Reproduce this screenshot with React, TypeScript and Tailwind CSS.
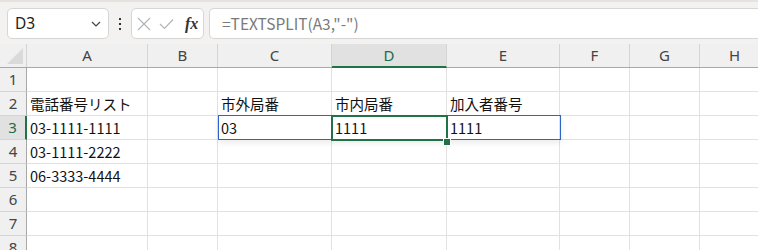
import React from "react";

const cols = [
  { key: "A", w: 121 },
  { key: "B", w: 70 },
  { key: "C", w: 114 },
  { key: "D", w: 115 },
  { key: "E", w: 113 },
  { key: "F", w: 70 },
  { key: "G", w: 70 },
  { key: "H", w: 70 },
];

const data: Record<string, string> = {
  A2: "電話番号リスト",
  A3: "03-1111-1111",
  A4: "03-1111-2222",
  A5: "06-3333-4444",
  C2: "市外局番",
  D2: "市内局番",
  E2: "加入者番号",
  C3: "03",
  D3: "1111",
  E3: "1111",
};

const cellFont = { fontFamily: '"Noto Sans CJK JP", "Noto Sans", sans-serif' };
const uiFont = { fontFamily: '"Noto Sans", "Open Sans", sans-serif' };

export default function App() {
  const rows = [1, 2, 3, 4, 5, 6, 7, 8];
  return (
    <div className="w-[758px] h-[250px] overflow-hidden bg-[#f3f2f1] flex flex-col" style={uiFont}>
      {/* toolbar */}
      <div className="h-[44px] flex items-start pt-[6px] border-t-2 border-[#e6e2de] shrink-0">
        <div className="ml-[7px] w-[102px] h-[31px] bg-white border border-[#d6d6d6] rounded-[5px] flex items-center pl-[7px] pr-[7px] justify-between">
          <span className="text-[15.5px] text-[#222]">D3</span>
          <svg width="10" height="6" viewBox="0 0 10 6">
            <path d="M1 1 L5 5 L9 1" stroke="#444" strokeWidth="1.2" fill="none" />
          </svg>
        </div>
        <div className="w-[22px] h-[31px] flex flex-col items-center justify-center gap-[3px]">
          <div className="w-[2px] h-[2px] bg-[#333]" />
          <div className="w-[2px] h-[2px] bg-[#333]" />
          <div className="w-[2px] h-[2px] bg-[#333]" />
        </div>
        <div className="w-[73px] h-[31px] bg-white border border-[#d6d6d6] rounded-[5px] flex items-center pl-[5px] gap-[8px]">
          <svg width="14" height="14" viewBox="0 0 14 14">
            <path d="M1 1 L13 13 M13 1 L1 13" stroke="#b4b4b4" strokeWidth="1.2" fill="none" />
          </svg>
          <svg width="15" height="12" viewBox="0 0 15 12">
            <path d="M1 6 L5.5 10.5 L14 1.5" stroke="#b4b4b4" strokeWidth="1.2" fill="none" />
          </svg>
          <span
            className="text-[16px] italic font-bold text-[#333] leading-none ml-[3px]"
            style={{ fontFamily: '"Liberation Serif", "DejaVu Serif", serif' }}
          >
            fx
          </span>
        </div>
        <div className="ml-[5px] flex-1 h-[31px] bg-white border border-[#d6d6d6] border-r-0 rounded-l-[5px] flex items-center pl-[12px]">
          <span className="text-[15.5px] text-[#7a7a7a]" style={cellFont}>
            =TEXTSPLIT(A3,"-")
          </span>
        </div>
      </div>

      {/* grid */}
      <div className="relative flex-1 bg-white">
        {/* header row */}
        <div className="flex h-[24px] bg-[#f0f0f0] border-b border-[#a8a8a8]">
          <div className="w-[27px] shrink-0 border-r border-[#d4d4d4] relative flex items-end justify-end pr-[3px] pb-[3px]">
            <svg width="16" height="16" viewBox="0 0 16 16">
              <path d="M16 0 L16 16 L0 16 Z" fill="#dadada" />
            </svg>
          </div>
          {cols.map((c) => (
            <div
              key={c.key}
              className={`shrink-0 flex items-center justify-center text-[15px] border-r border-[#d4d4d4] ${
                c.key === "D" ? "bg-[#e1e1e1] text-[#1e6b48] border-b-2 border-b-[#217346] -mb-px" : "text-[#444]"
              }`}
              style={{ width: c.w }}
            >
              {c.key}
            </div>
          ))}
        </div>
        {rows.map((r) => (
          <div key={r} className="flex h-[24px]">
            <div
              className={`w-[27px] shrink-0 flex items-center justify-center text-[15px] border-b ${
                r === 3
                  ? "bg-[#e1e1e1] text-[#1e6b48] border-r-2 border-r-[#217346] border-b-[#d4d4d4]"
                  : "bg-[#f0f0f0] text-[#444] border-r border-r-[#a8a8a8] border-b-[#d4d4d4]"
              }`}
            >
              {r}
            </div>
            {cols.map((c) => (
              <div
                key={c.key}
                className="shrink-0 border-r border-b border-[#e1e1e1] flex items-center pl-[3px] text-[14.5px] text-[#111] whitespace-nowrap overflow-visible"
                style={{ width: c.w, ...cellFont }}
              >
                {data[`${c.key}${r}`] ?? ""}
              </div>
            ))}
          </div>
        ))}

        {/* spill range border */}
        <div className="absolute left-[218px] top-[71px] w-[343px] h-[25px] border border-[#2d64c8] shadow-[0_3px_6px_rgba(0,0,0,0.08)] pointer-events-none" />
        {/* active cell */}
        <div className="absolute left-[331px] top-[71px] w-[117px] h-[26px] border-2 border-[#217346] pointer-events-none" />
        {/* fill handle */}
        <div className="absolute left-[444px] top-[94px] w-[6px] h-[6px] bg-[#217346] border border-white box-content -translate-x-[1px] pointer-events-none" />
      </div>
    </div>
  );
}
